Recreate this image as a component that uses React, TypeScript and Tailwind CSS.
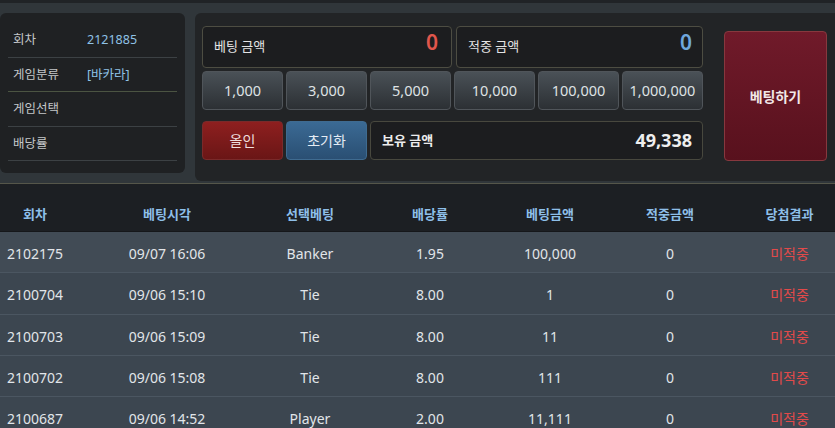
import React from "react";

const font = { fontFamily: '"Noto Sans", "Noto Sans CJK KR", sans-serif' };

const infoRows = [
  { label: "회차", value: "2121885" },
  { label: "게임분류", value: "[바카라]" },
  { label: "게임선택", value: "" },
  { label: "배당률", value: "" },
];

const chips = ["1,000", "3,000", "5,000", "10,000", "100,000", "1,000,000"];

const rows = [
  ["2102175", "09/07 16:06", "Banker", "1.95", "100,000", "0", "미적중"],
  ["2100704", "09/06 15:10", "Tie", "8.00", "1", "0", "미적중"],
  ["2100703", "09/06 15:09", "Tie", "8.00", "11", "0", "미적중"],
  ["2100702", "09/06 15:08", "Tie", "8.00", "111", "0", "미적중"],
  ["2100687", "09/06 14:52", "Player", "2.00", "11,111", "0", "미적중"],
];

const headers = ["회차", "베팅시각", "선택베팅", "배당률", "베팅금액", "적중금액", "당첨결과"];

const gridCols = "grid grid-cols-[70px_194px_92px_148px_92px_148px_1fr]";

export default function App() {
  return (
    <div style={font} className="w-[835px] h-[428px] overflow-hidden bg-[#1d2024] text-[#dde1e5]">
      {/* top section */}
      <div className="border-t-[3px] border-[#202326] bg-[#30363a] pt-[10px] pb-[2px] border-b border-b-[#55564a]">
        <div className="flex gap-[10px]">
          {/* left info panel */}
          <div className="w-[185px] h-[160px] rounded-md bg-[#1f2123] px-[8px] pt-[10px]">
            {infoRows.map((r, i) => (
              <div
                key={r.label}
                className={`h-[34.5px] flex items-center pl-[5px] pt-[2px] border-b ${
                  i === 1 ? "border-[#4b5442]" : "border-[#3c4144]"
                }`}
              >
                <span className="w-[74px] text-[12.5px] text-[#c4c7c9]">{r.label}</span>
                <span className="text-[12.5px] text-[#8fc2e6]">{r.value}</span>
              </div>
            ))}
          </div>

          {/* right betting panel */}
          <div className="flex-1 h-[168px] rounded-l-md bg-[#222426] pl-[7px] pt-[13px] pr-[8px] flex">
            <div className="w-[501px] flex flex-col">
              <div className="flex gap-[4px] h-[42px]">
                <div className="flex-1 rounded-[4px] border border-[#4d4d42] bg-[#1c1d1f] flex items-center justify-between pl-[11px] pr-[13px]">
                  <span className="text-[13px] text-[#e4e4e4]">베팅 금액</span>
                  <span className="text-[21px] font-semibold text-[#e0564c] -mt-[9px]">0</span>
                </div>
                <div className="flex-1 rounded-[4px] border border-[#4d4d42] bg-[#1c1d1f] flex items-center justify-between pl-[11px] pr-[10px]">
                  <span className="text-[13px] text-[#e4e4e4]">적중 금액</span>
                  <span className="text-[21px] font-semibold text-[#6fa6dc] -mt-[9px]">0</span>
                </div>
              </div>
              <div className="flex gap-[3px] h-[39px] mt-[3px]">
                {chips.map((c) => (
                  <div
                    key={c}
                    className="w-[81px] rounded-[4px] border border-[#50555a] bg-gradient-to-b from-[#4a5157] to-[#2c3034] flex items-center justify-center text-[14.5px] text-[#dfe2e4]"
                  >
                    {c}
                  </div>
                ))}
              </div>
              <div className="flex gap-[3px] h-[39px] mt-[11px]">
                <div className="w-[81px] rounded-[4px] border border-[#7a2a2a] bg-gradient-to-b from-[#8e1f1f] to-[#6a1616] flex items-center justify-center text-[14px] text-[#eedede]">
                  올인
                </div>
                <div className="w-[81px] rounded-[4px] border border-[#3f6b90] bg-gradient-to-b from-[#3b6a94] to-[#2a4f73] flex items-center justify-center text-[14px] text-[#e4ecf4]">
                  초기화
                </div>
                <div className="flex-1 rounded-[4px] border border-[#48483e] bg-[#1c1d1f] flex items-center justify-between pl-[11px] pr-[10px]">
                  <span className="text-[13px] font-bold text-[#ececec]">보유 금액</span>
                  <span className="text-[18px] font-bold text-[#eeeeee]">49,338</span>
                </div>
              </div>
            </div>
            <div className="ml-[21px] mt-[5px] w-[103px] h-[130px] rounded-[4px] border border-[#87383e] bg-gradient-to-b from-[#701a2a] to-[#58111d] flex items-center justify-center text-[14px] font-bold text-[#f2e8e8]">
              베팅하기
            </div>
          </div>
        </div>
      </div>

      {/* table */}
      <div className={`${gridCols} h-[48px] bg-[#1c1f23] items-end pb-[7px] border-b border-[#15171a]`}>
        {headers.map((h) => (
          <div key={h} className="text-center text-[13px] font-bold text-[#8ebfe9]">
            {h}
          </div>
        ))}
      </div>
      {rows.map((r, i) => (
        <div
          key={i}
          className={`${gridCols} h-[41.25px] items-center pt-[3px] border-b border-[#4b5661] ${
            i === 0 ? "bg-[#414b55]" : "bg-[#3c4650]"
          }`}
        >
          {r.map((c, j) => (
            <div
              key={j}
              className={`text-center text-[14px] ${j === 6 ? "text-[#e24a4a]" : "text-[#e1e5e9]"}`}
            >
              {c}
            </div>
          ))}
        </div>
      ))}
    </div>
  );
}
